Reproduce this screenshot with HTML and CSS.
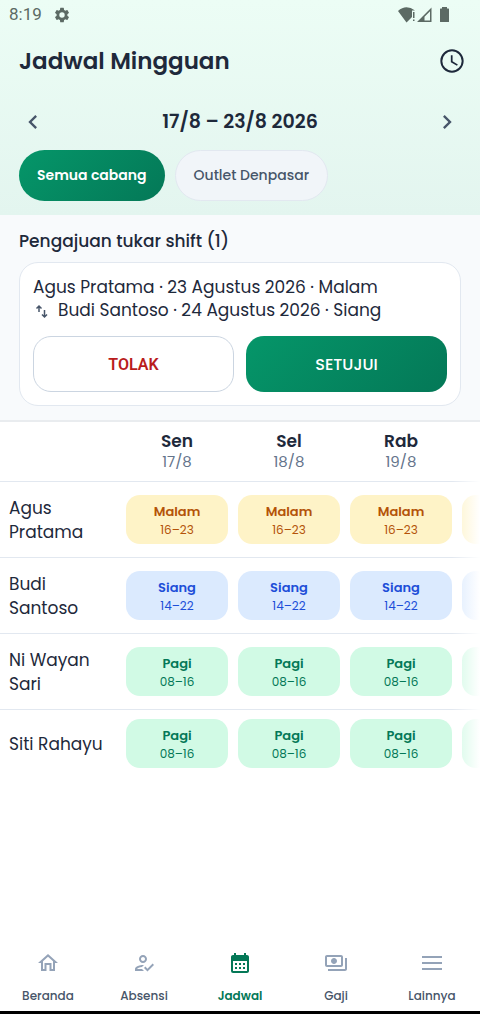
FILE: index.html
```html
<!DOCTYPE html>
<html lang="id">
<head>
<meta charset="utf-8">
<meta name="viewport" content="width=device-width, initial-scale=1">
<title>Jadwal Mingguan</title>
<link rel="stylesheet" href="styles.css">
</head>
<body>
<div class="app">
  <header class="top">
    <div class="status">
      <span class="status-time">8:19</span>
      <svg class="status-gear" viewBox="0 0 24 24" aria-hidden="true"><path d="M19.14 12.94c.04-.3.06-.61.06-.94s-.02-.64-.07-.94l2.03-1.58a.49.49 0 0 0 .12-.61l-1.92-3.32a.49.49 0 0 0-.59-.22l-2.39.96a7 7 0 0 0-1.62-.94l-.36-2.54a.48.48 0 0 0-.48-.41h-3.84a.47.47 0 0 0-.47.41l-.36 2.54c-.59.24-1.13.57-1.62.94l-2.39-.96a.48.48 0 0 0-.59.22L2.74 8.87a.48.48 0 0 0 .12.61l2.03 1.58c-.05.3-.09.63-.09.94s.02.64.07.94l-2.03 1.58a.49.49 0 0 0-.12.61l1.92 3.32c.12.22.37.29.59.22l2.39-.96c.5.38 1.03.7 1.62.94l.36 2.54c.05.24.24.41.48.41h3.84c.24 0 .44-.17.47-.41l.36-2.54c.59-.24 1.13-.56 1.62-.94l2.39.96c.22.08.47 0 .59-.22l1.92-3.32a.48.48 0 0 0-.12-.61zM12 15.6a3.6 3.6 0 1 1 0-7.2 3.6 3.6 0 0 1 0 7.2z"/></svg>
      <svg class="status-signal" viewBox="0 0 54 18" aria-hidden="true">
        <path d="M0 5Q8-2 17 4.500H14V11L8.500 16.500z"/>
        <path d="M15 6h1.500v6H15zM15 13.500h1.500V15H15z"/>
        <path fill-rule="evenodd" d="M19 16 33.500 1.500V16zM26.500 14.500H32V5.200l-5.500 5.500z"/>
        <path d="M44 2.500V1h5v1.500h1.500q.5 0 .5.500v12.500q0 .5-.5.500h-8q-.5 0-.5-.5V3q0-.5.500-.5z"/>
      </svg>
    </div>
    <div class="title-row">
      <h1 class="title">Jadwal Mingguan</h1>
      <button class="icon-button" type="button" aria-label="Riwayat">
        <svg class="icon-large" viewBox="0 0 24 24" aria-hidden="true"><path d="M11.990 2C6.470 2 2 6.480 2 12s4.470 10 9.990 10C17.520 22 22 17.520 22 12S17.520 2 11.990 2zM12 20.300a8.300 8.300 0 1 1 0-16.600 8.300 8.300 0 0 1 0 16.600zM12.500 7H11v6l5.250 3.150.75-1.230-4.500-2.670z"/></svg>
      </button>
    </div>
    <div class="week">
      <button class="icon-button muted" type="button" aria-label="Minggu sebelumnya">
        <svg class="icon-chevron" viewBox="0 0 24 24" aria-hidden="true"><path d="M15.410 7.410 14 6l-6 6 6 6 1.410-1.410L10.830 12z"/></svg>
      </button>
      <p class="week-label">17/8 – 23/8 2026</p>
      <button class="icon-button muted" type="button" aria-label="Minggu berikutnya">
        <svg class="icon-chevron" viewBox="0 0 24 24" aria-hidden="true"><path d="M10 6 8.590 7.410 13.170 12l-4.580 4.590L10 18l6-6z"/></svg>
      </button>
    </div>
    <div class="chips">
      <button class="chip chip-active" type="button" aria-pressed="true">Semua cabang</button>
      <button class="chip" type="button" aria-pressed="false">Outlet Denpasar</button>
    </div>
  </header>

  <main class="content">
    <section class="requests">
      <h2 class="section-title">Pengajuan tukar shift (1)</h2>
      <article class="card">
        <p class="swap">Agus Pratama · 23 Agustus 2026 · Malam</p>
        <p class="swap swap-to">
          <svg class="swap-icon" viewBox="0 0 18 18" aria-hidden="true"><path d="M6 10V4M3.500 6.500 6 4l2.500 2.500M11.500 8v7M9 12.500l2.500 2.500 2.500-2.500"/></svg>
          <span>Budi Santoso · 24 Agustus 2026 · Siang</span>
        </p>
        <div class="actions">
          <button class="action reject" type="button">TOLAK</button>
          <button class="action approve" type="button">SETUJUI</button>
        </div>
      </article>
    </section>

    <div class="schedule">
      <div class="scroller">
        <table class="grid">
          <thead>
            <tr>
              <td class="name"></td>
              <th class="day" scope="col">Sen<span class="date">17/8</span></th>
              <th class="day" scope="col">Sel<span class="date">18/8</span></th>
              <th class="day" scope="col">Rab<span class="date">19/8</span></th>
              <td class="day"></td>
            </tr>
          </thead>
          <tbody>
            <tr>
              <th class="name" scope="row">Agus Pratama</th>
              <td class="cell"><div class="shift night"><b class="shift-name">Malam</b><span>16–23</span></div></td>
              <td class="cell"><div class="shift night"><b class="shift-name">Malam</b><span>16–23</span></div></td>
              <td class="cell"><div class="shift night"><b class="shift-name">Malam</b><span>16–23</span></div></td>
              <td class="cell"><div class="shift night"></div></td>
            </tr>
            <tr>
              <th class="name" scope="row">Budi Santoso</th>
              <td class="cell"><div class="shift noon"><b class="shift-name">Siang</b><span>14–22</span></div></td>
              <td class="cell"><div class="shift noon"><b class="shift-name">Siang</b><span>14–22</span></div></td>
              <td class="cell"><div class="shift noon"><b class="shift-name">Siang</b><span>14–22</span></div></td>
              <td class="cell"><div class="shift noon"></div></td>
            </tr>
            <tr>
              <th class="name" scope="row">Ni Wayan Sari</th>
              <td class="cell"><div class="shift morning"><b class="shift-name">Pagi</b><span>08–16</span></div></td>
              <td class="cell"><div class="shift morning"><b class="shift-name">Pagi</b><span>08–16</span></div></td>
              <td class="cell"><div class="shift morning"><b class="shift-name">Pagi</b><span>08–16</span></div></td>
              <td class="cell"><div class="shift morning"></div></td>
            </tr>
            <tr>
              <th class="name" scope="row">Siti Rahayu</th>
              <td class="cell"><div class="shift morning"><b class="shift-name">Pagi</b><span>08–16</span></div></td>
              <td class="cell"><div class="shift morning"><b class="shift-name">Pagi</b><span>08–16</span></div></td>
              <td class="cell"><div class="shift morning"><b class="shift-name">Pagi</b><span>08–16</span></div></td>
              <td class="cell"><div class="shift morning"></div></td>
            </tr>
          </tbody>
        </table>
      </div>
    </div>
  </main>

  <nav class="tabs" aria-label="Navigasi utama">
    <a class="tab" href="#beranda">
      <svg class="icon" viewBox="0 0 24 24" aria-hidden="true"><path d="m12 5.690 5 4.500V18h-1.500v-6h-7v6H7v-7.810zM12 3 2 12h3v8h5.500v-6h3v6H19v-8h3z"/></svg>
      Beranda
    </a>
    <a class="tab" href="#absensi">
      <svg class="icon" viewBox="0 0 24 24" aria-hidden="true"><path d="M11 12c2.210 0 4-1.790 4-4s-1.790-4-4-4-4 1.790-4 4 1.790 4 4 4zm0-6c1.100 0 2 .9 2 2s-.9 2-2 2-2-.9-2-2 .9-2 2-2zM5 18c.2-.63 2.570-1.680 4.960-1.940l2.040-2c-.39-.04-.68-.06-1-.06-2.670 0-8 1.340-8 4v2h9l-2-2zm15.600-5.500-5.130 5.170-2.070-2.080L12 17l3.470 3.500L22 13.910z"/></svg>
      Absensi
    </a>
    <a class="tab tab-active" href="#jadwal" aria-current="page">
      <svg class="icon" viewBox="0 0 24 24" aria-hidden="true"><path fill-rule="evenodd" d="M19 4h-1V2h-2v2H8V2H6v2H5c-1.110 0-1.990.9-1.990 2L3 20a2 2 0 0 0 2 2h14c1.100 0 2-.9 2-2V6c0-1.100-.9-2-2-2zm0 16H5V10h14zM7 12h2v2H7zM11 12h2v2h-2zM15 12h2v2h-2zM7 16h2v2H7zM11 16h2v2h-2zM15 16h2v2h-2z"/></svg>
      Jadwal
    </a>
    <a class="tab" href="#gaji">
      <svg class="icon" viewBox="0 0 24 24" aria-hidden="true"><path fill-rule="evenodd" d="M19 14V6c0-1.100-.9-2-2-2H3c-1.100 0-2 .9-2 2v8c0 1.100.9 2 2 2h14c1.100 0 2-.9 2-2zm-2 0H3V6h14zm-7-7c-1.660 0-3 1.340-3 3s1.340 3 3 3 3-1.340 3-3-1.340-3-3-3zm13 0v11c0 1.100-.9 2-2 2H4v-2h17V7z"/></svg>
      Gaji
    </a>
    <a class="tab" href="#lainnya">
      <svg class="icon" viewBox="0 0 24 24" aria-hidden="true"><path d="M2 17h20v2H2zM2 11h20v2H2zM2 5h20v2H2z"/></svg>
      Lainnya
    </a>
  </nav>
</div>
</body>
</html>
```

FILE: styles.css
```css
* {
  box-sizing: border-box;
}

body {
  margin: 0;
  background: #fff;
  color: #1e293b;
  font-family: Poppins, Inter, "Open Sans", sans-serif;
}

h1,
h2,
p {
  margin: 0;
}

button {
  font: inherit;
  cursor: pointer;
}

svg {
  display: block;
  flex: none;
  fill: currentColor;
}

.app {
  display: flex;
  flex-direction: column;
  min-height: 100vh;
  border-bottom: 3px solid #000;
}

.top {
  padding-bottom: 14px;
  background: linear-gradient(#ecfdf5, #e3f5ef);
}

.status {
  display: flex;
  align-items: center;
  height: 29px;
  padding: 0 28px 0 9px;
  color: #5c6a64;
}

.status-time {
  font: 17px/29px Roboto, sans-serif;
}

.status-gear {
  width: 18px;
  height: 18px;
  margin-left: 11px;
}

.status-signal {
  width: 54px;
  height: 18px;
  margin-left: auto;
}

.title-row {
  display: flex;
  align-items: center;
  justify-content: space-between;
  height: 63px;
  padding: 0 14px 0 19px;
}

.title {
  font-size: 23px;
  font-weight: 600;
  line-height: 32px;
}

.icon-button {
  display: grid;
  place-items: center;
  padding: 0;
  border: 0;
  background: none;
  color: #1e293b;
}

.icon-large {
  width: 28px;
  height: 28px;
}

.icon-chevron {
  width: 28px;
  height: 28px;
}

.icon {
  width: 24px;
  height: 24px;
}

.muted {
  color: #475569;
}

.week {
  display: flex;
  align-items: center;
  justify-content: space-between;
  height: 58px;
  padding: 2px 19px 0;
}

.week-label {
  font-size: 19px;
  font-weight: 600;
  line-height: 28px;
}

.chips {
  display: flex;
  gap: 10px;
  padding: 0 19px;
}

.chip {
  height: 51px;
  padding: 0 18px;
  border: 1px solid #e2e8f0;
  border-radius: 26px;
  background: #f1f5f9;
  color: #475569;
  font-size: 14px;
  font-weight: 500;
}

.chip-active {
  border: 0;
  background: linear-gradient(135deg, #059669, #047857);
  color: #fff;
  font-weight: 600;
}

.content {
  flex: 1;
}

.requests {
  padding: 14px 19px;
  border-bottom: 2px solid #e9ecef;
  background: #f8fafc;
}

.section-title {
  margin-bottom: 9px;
  font-size: 17px;
  font-weight: 500;
  line-height: 24px;
}

.card {
  padding: 13px;
  border: 1px solid #e2e8f0;
  border-radius: 19px;
  background: #fff;
}

.swap {
  font-size: 17px;
  line-height: 23px;
}

.swap-to {
  display: flex;
  align-items: center;
  gap: 7px;
}

.swap-icon {
  width: 18px;
  height: 18px;
  fill: none;
  stroke: #475569;
  stroke-width: 1.5;
}

.actions {
  display: grid;
  grid-template-columns: 1fr 1fr;
  gap: 12px;
  margin-top: 14px;
}

.action {
  height: 56px;
  border: 1px solid #cbd5e1;
  border-radius: 18px;
  font-size: 16px;
  font-weight: 600;
}

.reject {
  background: #fff;
  color: #b91c1c;
  font-family: Roboto, sans-serif;
}

.approve {
  border: 0;
  background: linear-gradient(135deg, #059669, #047857);
  color: #fff;
  font-weight: 500;
}

.schedule {
  position: relative;
}

/* Fades the columns that continue past the right edge. */
.schedule::after {
  content: "";
  position: absolute;
  inset: 0 0 0 auto;
  width: 28px;
  background: linear-gradient(90deg, rgba(255, 255, 255, 0), #fff);
  pointer-events: none;
}

.scroller {
  overflow-x: auto;
  scrollbar-width: none;
}

.grid {
  width: 569px;
  border-collapse: collapse;
  table-layout: fixed;
}

.grid tr {
  border-bottom: 1px solid #e2e8f0;
}

.grid tbody tr:last-child {
  border-bottom: 0;
}

.name {
  width: 121px;
  padding: 14px 10px 13px 9px;
  font-size: 17px;
  font-weight: 400;
  line-height: 24px;
  text-align: left;
}

.day {
  padding: 8px 0 9px;
  font-size: 17px;
  font-weight: 600;
  line-height: 22px;
}

.date {
  display: block;
  color: #64748b;
  font-size: 15px;
  font-weight: 400;
  line-height: 20px;
}

.cell {
  padding: 9px 5px;
}

.shift {
  display: flex;
  flex-direction: column;
  justify-content: center;
  height: 49px;
  padding-top: 3px;
  border-radius: 14px;
  font-size: 12px;
  line-height: 18px;
  text-align: center;
}

.shift-name {
  font-size: 13px;
  font-weight: 600;
}

.night {
  background: #fef3c7;
  color: #b45309;
}

.noon {
  background: #dbeafe;
  color: #1d4ed8;
}

.morning {
  background: #d1fae5;
  color: #047857;
}

.tabs {
  display: grid;
  grid-template-columns: repeat(5, 1fr);
  padding: 12px 0 6px;
  background: #fff;
}

.tab {
  display: flex;
  flex-direction: column;
  align-items: center;
  gap: 12px;
  color: #475569;
  font-size: 12px;
  font-weight: 500;
  line-height: 18px;
  text-decoration: none;
}

.tab .icon {
  color: #94a3b8;
}

.tab-active,
.tab-active .icon {
  color: #047857;
}

.tab-active {
  font-weight: 600;
}
```
